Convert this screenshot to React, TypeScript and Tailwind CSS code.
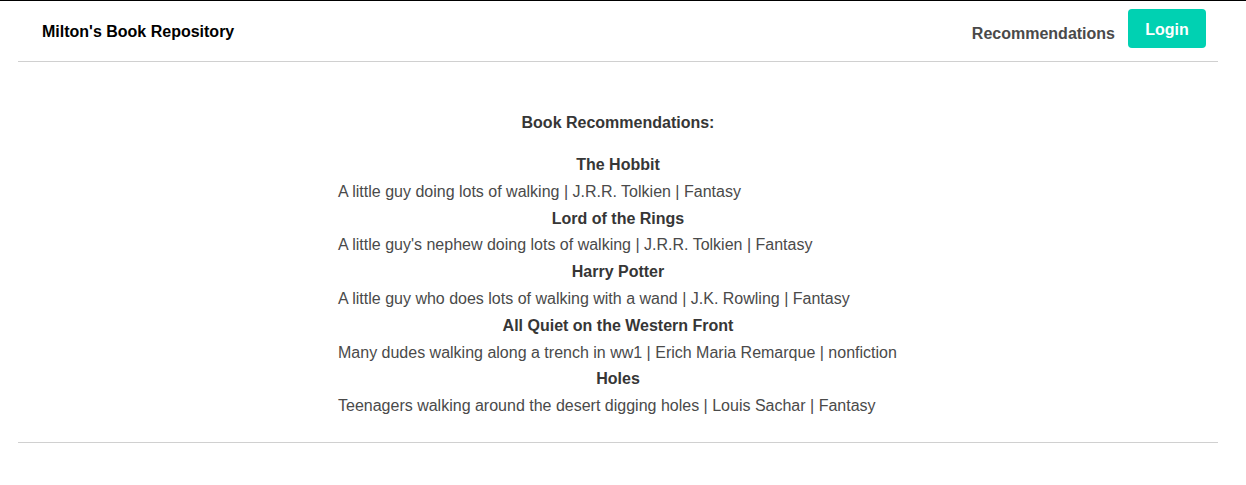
const books = [
  { title: "The Hobbit", desc: "A little guy doing lots of walking", author: "J.R.R. Tolkien", genre: "Fantasy" },
  { title: "Lord of the Rings", desc: "A little guy's nephew doing lots of walking", author: "J.R.R. Tolkien", genre: "Fantasy" },
  { title: "Harry Potter", desc: "A little guy who does lots of walking with a wand", author: "J.K. Rowling", genre: "Fantasy" },
  { title: "All Quiet on the Western Front", desc: "Many dudes walking along a trench in ww1", author: "Erich Maria Remarque", genre: "nonfiction" },
  { title: "Holes", desc: "Teenagers walking around the desert digging holes", author: "Louis Sachar", genre: "Fantasy" },
];

export default function App() {
  return (
    <div className="min-h-[485px] bg-white border-t border-black font-['Liberation_Sans',Arial,sans-serif] text-[16px] text-[#4a4a4a]">
      <div className="w-[1200px] ml-[18px]">
        <nav className="h-[61px] flex items-center justify-between pl-6 pr-3 border-b border-[#d0d0d0]">
          <span className="font-bold text-black mt-[1px]">Milton's Book Repository</span>
          <div className="flex items-center gap-[13px]">
            <a className="font-bold text-[#4a4a4a] mt-[5px]">Recommendations</a>
            <button className="h-[39px] w-[78px] rounded-[4px] bg-[#00d1b2] text-white font-bold -mt-[5px] pt-[2px]">
              Login
            </button>
          </div>
        </nav>

        <main className="pt-[47px] pb-[22px] border-b border-[#d0d0d0]">
          <h2 className="text-center font-bold text-[#363636] leading-[27px] mb-[16px]">Book Recommendations:</h2>
          <div className="w-[560px] mx-auto leading-[26.8px]">
            {books.map((b) => (
              <div key={b.title}>
                <div className="text-center font-bold text-[#363636]">{b.title}</div>
                <div className="text-[#4a4a4a] whitespace-nowrap">
                  {b.desc} | {b.author} | {b.genre}
                </div>
              </div>
            ))}
          </div>
        </main>
      </div>
    </div>
  );
}
